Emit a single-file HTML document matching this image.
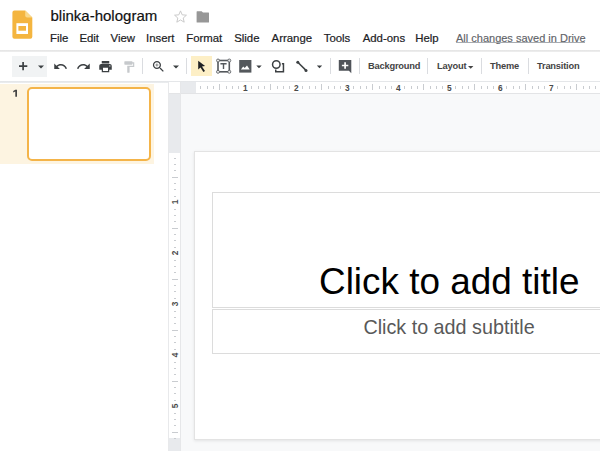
<!DOCTYPE html>
<html><head><meta charset="utf-8">
<style>
*{margin:0;padding:0;box-sizing:border-box}
html,body{width:600px;height:451px;overflow:hidden;background:#fff;font-family:"Liberation Sans",sans-serif;position:relative}
.a{position:absolute}
.t{position:absolute;white-space:nowrap;line-height:1}
.menu{font-size:11.4px;color:#202124;top:32.8px;-webkit-text-stroke:0.2px #202124}
.sep{position:absolute;width:1px;background:#dadce0;top:58px;height:16px}
.btxt{position:absolute;font-size:9.3px;color:#444;top:62.4px;line-height:1;white-space:nowrap;font-weight:bold;letter-spacing:-0.2px}
svg{position:absolute;display:block}
</style></head><body>

<!-- header -->
<svg class="a" style="left:12px;top:10px" width="21" height="29" viewBox="0 0 21 29"><path d="M2.4 0.4H13.2L20.3 7.6V26.7a2 2 0 0 1-2 2H2.4a2 2 0 0 1-2-2V2.4a2 2 0 0 1 2-2z" fill="#f4b53f"/><path d="M13.2 0.4L20.3 7.6H15.2a2 2 0 0 1-2-2z" fill="#f9d98c"/><rect x="4.4" y="13.2" width="11.6" height="10.8" fill="#fff"/><rect x="6.4" y="16" width="7.6" height="4.7" fill="#f4b53f"/></svg>
<div class="t" style="left:50.5px;top:8.3px;font-size:15px;color:#111;-webkit-text-stroke:0.2px #111">blinka-hologram</div>
<!-- star -->
<svg style="left:173px;top:9px" width="15" height="15" viewBox="0 0 24 24"><path d="M12 3l2.7 6.3 6.8.6-5.2 4.5 1.6 6.7L12 17.5l-5.9 3.6 1.6-6.7-5.2-4.5 6.8-.6z" fill="none" stroke="#c6c6c6" stroke-width="1.5" stroke-linejoin="round"/></svg>
<!-- folder -->
<svg style="left:196px;top:11px" width="14" height="12" viewBox="0 0 14 12"><path d="M1.1 0.2H5.6L7 1.6H12.5a0.5 0.5 0 0 1 .5.5V11a0.5 0.5 0 0 1-.5.5H1.1a0.5 0.5 0 0 1-.5-.5V0.7a0.5 0.5 0 0 1 .5-.5z" fill="#979797"/></svg>

<div class="t menu" style="left:50px">File</div>
<div class="t menu" style="left:79.4px">Edit</div>
<div class="t menu" style="left:110.5px">View</div>
<div class="t menu" style="left:146px">Insert</div>
<div class="t menu" style="left:186.2px">Format</div>
<div class="t menu" style="left:234.2px">Slide</div>
<div class="t menu" style="left:271.6px">Arrange</div>
<div class="t menu" style="left:323.7px">Tools</div>
<div class="t menu" style="left:362.7px">Add-ons</div>
<div class="t menu" style="left:415.2px">Help</div>
<div class="t menu" style="left:456px;font-size:11px;color:#5f6368;-webkit-text-stroke:0.15px #5f6368">All changes saved in Drive</div><div class="a" style="left:456px;top:42px;width:129px;height:1px;background:#a7abb0"></div>

<div class="a" style="left:0;top:50px;width:600px;height:2px;background:linear-gradient(#e4e4e4,#efefef)"></div>

<!-- toolbar -->
<div class="a" style="left:191px;top:56px;width:21px;height:20px;background:#fdefc6"></div>
<div class="a" style="left:12px;top:56px;width:35px;height:21px;background:#f1f3f4"></div>
<svg style="left:0;top:51px" width="60" height="30" viewBox="0 51 60 30"><path d="M19 65.35h8.3v1.7H19zM22.25 62.1h1.7v8.2h-1.7z" fill="#3c4043"/><path d="M38 65.6h6l-3 3z" fill="#3c4043"/></svg>

<svg style="left:53px;top:59px" width="15" height="15" viewBox="0 0 24 24"><path d="M12.5 8c-2.65 0-5.05.99-6.9 2.6L2 7v9h9l-3.62-3.62c1.39-1.16 3.16-1.88 5.12-1.88 3.540 0 6.55 2.31 7.6 5.5l2.37-.78C21.08 11.03 17.15 8 12.5 8z" fill="#3c4043"/></svg>
<svg style="left:76px;top:59px" width="15" height="15" viewBox="0 0 24 24"><path d="M18.4 10.6C16.55 8.99 14.15 8 11.5 8c-4.65 0-8.58 3.03-9.96 7.22L3.9 16c1.05-3.19 4.05-5.5 7.6-5.5 1.95 0 3.73.72 5.12 1.88L13 16h9V7l-3.6 3.6z" fill="#3c4043"/></svg>
<svg style="left:98px;top:59px" width="15" height="15" viewBox="0 0 24 24"><path d="M19 8H5c-1.66 0-3 1.34-3 3v6h4v4h12v-4h4v-6c0-1.66-1.34-3-3-3zm-3 11H8v-5h8v5zm3-7c-.55 0-1-.45-1-1s.45-1 1-1 1 .45 1 1-.45 1-1 1zm-1-9H6v4h12V3z" fill="#3c4043"/></svg>
<svg style="left:121.5px;top:59.5px" width="14" height="14" viewBox="0 0 24 24"><path d="M18 4V3c0-.55-.45-1-1-1H5c-.55 0-1 .45-1 1v4c0 .55.45 1 1 1h12c.55 0 1-.45 1-1V6h1v4H9v11c0 .55.45 1 1 1h2c.55 0 1-.45 1-1v-9h8V4h-3z" fill="#c6c9cc"/></svg>
<div class="sep" style="left:142px"></div>
<svg style="left:151px;top:59px" width="15" height="15" viewBox="0 0 24 24"><path d="M15.5 14h-.79l-.28-.27C15.41 12.59 16 11.11 16 9.5 16 5.91 13.090 3 9.5 3S3 5.91 3 9.5 5.91 16 9.5 16c1.61 0 3.09-.59 4.23-1.57l.27.28v.79l5 4.99L20.49 19l-4.99-5zm-6 0C7.01 14 5 11.99 5 9.5S7.01 5 9.5 5 14 7.01 14 9.5 11.99 14 9.5 14zm2.5-4h-2v2H9v-2H7V9h2V7h1v2h2v1z" fill="#3c4043"/></svg>
<svg style="left:0;top:51px" width="600" height="30" viewBox="0 51 600 30"><path d="M173 65.5h6l-3 3z M256.3 65.5h5.4l-2.7 2.7z M316.8 65.6h5.4l-2.7 2.7z" fill="#3c4043"/><path d="M198.2 60.8L205.1 66.1L202 66.5L205 71L203.4 72L200.5 67.4L198.2 69.6Z" fill="#202124"/><rect x="218" y="60.5" width="11.3" height="11.3" fill="none" stroke="#54585c" stroke-width="1.6"/><circle cx="218" cy="60.5" r="1.5" fill="#e8e8e8" stroke="#54585c" stroke-width="0.8"/><circle cx="229.3" cy="60.5" r="1.5" fill="#e8e8e8" stroke="#54585c" stroke-width="0.8"/><circle cx="218" cy="71.8" r="1.5" fill="#e8e8e8" stroke="#54585c" stroke-width="0.8"/><circle cx="229.3" cy="71.8" r="1.5" fill="#e8e8e8" stroke="#54585c" stroke-width="0.8"/><path d="M220.4 63.1h6.2v1.5h-2.4v4.5h-1.4v-4.5h-2.4z" fill="#54585c"/><rect x="239.2" y="60" width="12.2" height="12.6" fill="#54585c"/><path d="M240.9 69.6l2.3-3 1.5 1.3 2.3-2.4 2.7 4.1z" fill="#fff"/><circle cx="276.3" cy="64.5" r="3.75" fill="none" stroke="#3c4043" stroke-width="1.5"/><path d="M281.9 63.75H283.45V71.65H275.75V69.6" fill="none" stroke="#3c4043" stroke-width="1.5"/><path d="M297.8 62.2L306 70.4" stroke="#3c4043" stroke-width="1.5"/><circle cx="297.8" cy="62.2" r="1.5" fill="#3c4043"/><circle cx="306" cy="70.4" r="1.5" fill="#3c4043"/><path d="M338.8 60h12.5V73.2l-2.4-2.4H338.8z" fill="#50545a"/><path d="M341.9 64.65h6.4v1.7h-6.4zM344.25 62.3h1.7v6.4h-1.7z" fill="#fff"/></svg>
<div class="sep" style="left:186px"></div>







<div class="sep" style="left:330px"></div>

<div class="sep" style="left:359px"></div>
<div class="btxt" style="left:368px">Background</div>
<div class="sep" style="left:427px"></div>
<div class="btxt" style="left:437px">Layout</div>
<svg style="left:467.5px;top:66px" width="6" height="4" viewBox="0 0 6 4"><path d="M0 0h5.4L2.7 2.7z" fill="#444"/></svg>
<div class="sep" style="left:481px"></div>
<div class="btxt" style="left:490px">Theme</div>
<div class="sep" style="left:528px"></div>
<div class="btxt" style="left:537px">Transition</div>

<div class="a" style="left:0;top:81px;width:600px;height:2px;background:linear-gradient(#e2e4e7,#eceef0)"></div>

<!-- left panel -->
<div class="a" style="left:0;top:84px;width:154px;height:80px;background:#fdf4e1"></div>
<svg style="left:12px;top:89px" width="6" height="9" viewBox="0 0 6 9"><path d="M3.3 0.7H5V7.7H3.3V2.6L1.2 3.4V1.9z" fill="#444"/></svg>
<div class="a" style="left:27px;top:87px;width:124px;height:74px;border:2px solid #f4b449;border-radius:5px;background:#fff"></div>
<div class="a" style="left:168px;top:82px;width:1px;height:369px;background:#e8e9eb"></div>

<!-- canvas -->
<div class="a" style="left:169px;top:82px;width:431px;height:369px;background:#f8f9fa"></div>
<!-- rulers -->
<div class="a" style="left:169px;top:82px;width:431px;height:11px;background:#fff"></div>
<div class="a" style="left:180px;top:82px;width:16px;height:11px;background:#e8eaed"></div>
<div class="a" style="left:169px;top:93px;width:431px;height:1px;background:#e3e4e6"></div>
<div class="a" style="left:169px;top:94px;width:11px;height:357px;background:#fff"></div>
<div class="a" style="left:169px;top:94px;width:11px;height:59px;background:#e8eaed"></div>
<div class="a" style="left:169px;top:438px;width:11px;height:13px;background:#e8eaed"></div>
<div class="a" style="left:180px;top:82px;width:1px;height:369px;background:#e6e7e9"></div>
<!--HR--><div class="a" style="left:200.18px;top:86.3px;width:1px;height:2.3px;background:#c9ccd0"></div><div class="a" style="left:206.55px;top:86.3px;width:1px;height:2.3px;background:#c9ccd0"></div><div class="a" style="left:212.93px;top:86.3px;width:1px;height:2.3px;background:#c9ccd0"></div><div class="a" style="left:219.30px;top:84.3px;width:1px;height:6px;background:#c9ccd0"></div><div class="a" style="left:225.68px;top:86.3px;width:1px;height:2.3px;background:#c9ccd0"></div><div class="a" style="left:232.05px;top:86.3px;width:1px;height:2.3px;background:#c9ccd0"></div><div class="a" style="left:238.43px;top:86.3px;width:1px;height:2.3px;background:#c9ccd0"></div><div class="t" style="left:241.30px;top:83.6px;width:8px;height:8px;line-height:8px;font-size:8.3px;font-weight:bold;color:#4a4a4a;text-align:center">1</div><div class="a" style="left:251.18px;top:86.3px;width:1px;height:2.3px;background:#c9ccd0"></div><div class="a" style="left:257.55px;top:86.3px;width:1px;height:2.3px;background:#c9ccd0"></div><div class="a" style="left:263.93px;top:86.3px;width:1px;height:2.3px;background:#c9ccd0"></div><div class="a" style="left:270.30px;top:84.3px;width:1px;height:6px;background:#c9ccd0"></div><div class="a" style="left:276.68px;top:86.3px;width:1px;height:2.3px;background:#c9ccd0"></div><div class="a" style="left:283.05px;top:86.3px;width:1px;height:2.3px;background:#c9ccd0"></div><div class="a" style="left:289.43px;top:86.3px;width:1px;height:2.3px;background:#c9ccd0"></div><div class="t" style="left:292.30px;top:83.6px;width:8px;height:8px;line-height:8px;font-size:8.3px;font-weight:bold;color:#4a4a4a;text-align:center">2</div><div class="a" style="left:302.18px;top:86.3px;width:1px;height:2.3px;background:#c9ccd0"></div><div class="a" style="left:308.55px;top:86.3px;width:1px;height:2.3px;background:#c9ccd0"></div><div class="a" style="left:314.93px;top:86.3px;width:1px;height:2.3px;background:#c9ccd0"></div><div class="a" style="left:321.30px;top:84.3px;width:1px;height:6px;background:#c9ccd0"></div><div class="a" style="left:327.68px;top:86.3px;width:1px;height:2.3px;background:#c9ccd0"></div><div class="a" style="left:334.05px;top:86.3px;width:1px;height:2.3px;background:#c9ccd0"></div><div class="a" style="left:340.43px;top:86.3px;width:1px;height:2.3px;background:#c9ccd0"></div><div class="t" style="left:343.30px;top:83.6px;width:8px;height:8px;line-height:8px;font-size:8.3px;font-weight:bold;color:#4a4a4a;text-align:center">3</div><div class="a" style="left:353.18px;top:86.3px;width:1px;height:2.3px;background:#c9ccd0"></div><div class="a" style="left:359.55px;top:86.3px;width:1px;height:2.3px;background:#c9ccd0"></div><div class="a" style="left:365.93px;top:86.3px;width:1px;height:2.3px;background:#c9ccd0"></div><div class="a" style="left:372.30px;top:84.3px;width:1px;height:6px;background:#c9ccd0"></div><div class="a" style="left:378.68px;top:86.3px;width:1px;height:2.3px;background:#c9ccd0"></div><div class="a" style="left:385.05px;top:86.3px;width:1px;height:2.3px;background:#c9ccd0"></div><div class="a" style="left:391.43px;top:86.3px;width:1px;height:2.3px;background:#c9ccd0"></div><div class="t" style="left:394.30px;top:83.6px;width:8px;height:8px;line-height:8px;font-size:8.3px;font-weight:bold;color:#4a4a4a;text-align:center">4</div><div class="a" style="left:404.18px;top:86.3px;width:1px;height:2.3px;background:#c9ccd0"></div><div class="a" style="left:410.55px;top:86.3px;width:1px;height:2.3px;background:#c9ccd0"></div><div class="a" style="left:416.93px;top:86.3px;width:1px;height:2.3px;background:#c9ccd0"></div><div class="a" style="left:423.30px;top:84.3px;width:1px;height:6px;background:#c9ccd0"></div><div class="a" style="left:429.68px;top:86.3px;width:1px;height:2.3px;background:#c9ccd0"></div><div class="a" style="left:436.05px;top:86.3px;width:1px;height:2.3px;background:#c9ccd0"></div><div class="a" style="left:442.43px;top:86.3px;width:1px;height:2.3px;background:#c9ccd0"></div><div class="t" style="left:445.30px;top:83.6px;width:8px;height:8px;line-height:8px;font-size:8.3px;font-weight:bold;color:#4a4a4a;text-align:center">5</div><div class="a" style="left:455.18px;top:86.3px;width:1px;height:2.3px;background:#c9ccd0"></div><div class="a" style="left:461.55px;top:86.3px;width:1px;height:2.3px;background:#c9ccd0"></div><div class="a" style="left:467.93px;top:86.3px;width:1px;height:2.3px;background:#c9ccd0"></div><div class="a" style="left:474.30px;top:84.3px;width:1px;height:6px;background:#c9ccd0"></div><div class="a" style="left:480.68px;top:86.3px;width:1px;height:2.3px;background:#c9ccd0"></div><div class="a" style="left:487.05px;top:86.3px;width:1px;height:2.3px;background:#c9ccd0"></div><div class="a" style="left:493.43px;top:86.3px;width:1px;height:2.3px;background:#c9ccd0"></div><div class="t" style="left:496.30px;top:83.6px;width:8px;height:8px;line-height:8px;font-size:8.3px;font-weight:bold;color:#4a4a4a;text-align:center">6</div><div class="a" style="left:506.18px;top:86.3px;width:1px;height:2.3px;background:#c9ccd0"></div><div class="a" style="left:512.55px;top:86.3px;width:1px;height:2.3px;background:#c9ccd0"></div><div class="a" style="left:518.92px;top:86.3px;width:1px;height:2.3px;background:#c9ccd0"></div><div class="a" style="left:525.30px;top:84.3px;width:1px;height:6px;background:#c9ccd0"></div><div class="a" style="left:531.67px;top:86.3px;width:1px;height:2.3px;background:#c9ccd0"></div><div class="a" style="left:538.05px;top:86.3px;width:1px;height:2.3px;background:#c9ccd0"></div><div class="a" style="left:544.42px;top:86.3px;width:1px;height:2.3px;background:#c9ccd0"></div><div class="t" style="left:547.30px;top:83.6px;width:8px;height:8px;line-height:8px;font-size:8.3px;font-weight:bold;color:#4a4a4a;text-align:center">7</div><div class="a" style="left:557.17px;top:86.3px;width:1px;height:2.3px;background:#c9ccd0"></div><div class="a" style="left:563.55px;top:86.3px;width:1px;height:2.3px;background:#c9ccd0"></div><div class="a" style="left:569.92px;top:86.3px;width:1px;height:2.3px;background:#c9ccd0"></div><div class="a" style="left:576.30px;top:84.3px;width:1px;height:6px;background:#c9ccd0"></div><div class="a" style="left:582.67px;top:86.3px;width:1px;height:2.3px;background:#c9ccd0"></div><div class="a" style="left:589.05px;top:86.3px;width:1px;height:2.3px;background:#c9ccd0"></div><div class="a" style="left:595.42px;top:86.3px;width:1px;height:2.3px;background:#c9ccd0"></div><!--/HR-->
<!--VR--><div class="a" style="left:173.5px;top:157.57px;width:2.3px;height:1px;background:#c9ccd0"></div><div class="a" style="left:173.5px;top:163.95px;width:2.3px;height:1px;background:#c9ccd0"></div><div class="a" style="left:173.5px;top:170.32px;width:2.3px;height:1px;background:#c9ccd0"></div><div class="a" style="left:171.5px;top:176.70px;width:6px;height:1px;background:#c9ccd0"></div><div class="a" style="left:173.5px;top:183.07px;width:2.3px;height:1px;background:#c9ccd0"></div><div class="a" style="left:173.5px;top:189.45px;width:2.3px;height:1px;background:#c9ccd0"></div><div class="a" style="left:173.5px;top:195.82px;width:2.3px;height:1px;background:#c9ccd0"></div><div class="t" style="left:171px;top:198.00px;width:8px;height:8px;line-height:8px;font-size:8.3px;font-weight:bold;color:#4a4a4a;text-align:center;transform:rotate(-90deg)">1</div><div class="a" style="left:173.5px;top:208.57px;width:2.3px;height:1px;background:#c9ccd0"></div><div class="a" style="left:173.5px;top:214.95px;width:2.3px;height:1px;background:#c9ccd0"></div><div class="a" style="left:173.5px;top:221.32px;width:2.3px;height:1px;background:#c9ccd0"></div><div class="a" style="left:171.5px;top:227.70px;width:6px;height:1px;background:#c9ccd0"></div><div class="a" style="left:173.5px;top:234.07px;width:2.3px;height:1px;background:#c9ccd0"></div><div class="a" style="left:173.5px;top:240.45px;width:2.3px;height:1px;background:#c9ccd0"></div><div class="a" style="left:173.5px;top:246.82px;width:2.3px;height:1px;background:#c9ccd0"></div><div class="t" style="left:171px;top:249.00px;width:8px;height:8px;line-height:8px;font-size:8.3px;font-weight:bold;color:#4a4a4a;text-align:center;transform:rotate(-90deg)">2</div><div class="a" style="left:173.5px;top:259.57px;width:2.3px;height:1px;background:#c9ccd0"></div><div class="a" style="left:173.5px;top:265.95px;width:2.3px;height:1px;background:#c9ccd0"></div><div class="a" style="left:173.5px;top:272.32px;width:2.3px;height:1px;background:#c9ccd0"></div><div class="a" style="left:171.5px;top:278.70px;width:6px;height:1px;background:#c9ccd0"></div><div class="a" style="left:173.5px;top:285.07px;width:2.3px;height:1px;background:#c9ccd0"></div><div class="a" style="left:173.5px;top:291.45px;width:2.3px;height:1px;background:#c9ccd0"></div><div class="a" style="left:173.5px;top:297.82px;width:2.3px;height:1px;background:#c9ccd0"></div><div class="t" style="left:171px;top:300.00px;width:8px;height:8px;line-height:8px;font-size:8.3px;font-weight:bold;color:#4a4a4a;text-align:center;transform:rotate(-90deg)">3</div><div class="a" style="left:173.5px;top:310.57px;width:2.3px;height:1px;background:#c9ccd0"></div><div class="a" style="left:173.5px;top:316.95px;width:2.3px;height:1px;background:#c9ccd0"></div><div class="a" style="left:173.5px;top:323.32px;width:2.3px;height:1px;background:#c9ccd0"></div><div class="a" style="left:171.5px;top:329.70px;width:6px;height:1px;background:#c9ccd0"></div><div class="a" style="left:173.5px;top:336.07px;width:2.3px;height:1px;background:#c9ccd0"></div><div class="a" style="left:173.5px;top:342.45px;width:2.3px;height:1px;background:#c9ccd0"></div><div class="a" style="left:173.5px;top:348.82px;width:2.3px;height:1px;background:#c9ccd0"></div><div class="t" style="left:171px;top:351.00px;width:8px;height:8px;line-height:8px;font-size:8.3px;font-weight:bold;color:#4a4a4a;text-align:center;transform:rotate(-90deg)">4</div><div class="a" style="left:173.5px;top:361.57px;width:2.3px;height:1px;background:#c9ccd0"></div><div class="a" style="left:173.5px;top:367.95px;width:2.3px;height:1px;background:#c9ccd0"></div><div class="a" style="left:173.5px;top:374.32px;width:2.3px;height:1px;background:#c9ccd0"></div><div class="a" style="left:171.5px;top:380.70px;width:6px;height:1px;background:#c9ccd0"></div><div class="a" style="left:173.5px;top:387.07px;width:2.3px;height:1px;background:#c9ccd0"></div><div class="a" style="left:173.5px;top:393.45px;width:2.3px;height:1px;background:#c9ccd0"></div><div class="a" style="left:173.5px;top:399.82px;width:2.3px;height:1px;background:#c9ccd0"></div><div class="t" style="left:171px;top:402.00px;width:8px;height:8px;line-height:8px;font-size:8.3px;font-weight:bold;color:#4a4a4a;text-align:center;transform:rotate(-90deg)">5</div><div class="a" style="left:173.5px;top:412.57px;width:2.3px;height:1px;background:#c9ccd0"></div><div class="a" style="left:173.5px;top:418.95px;width:2.3px;height:1px;background:#c9ccd0"></div><div class="a" style="left:173.5px;top:425.32px;width:2.3px;height:1px;background:#c9ccd0"></div><div class="a" style="left:171.5px;top:431.70px;width:6px;height:1px;background:#c9ccd0"></div><div class="a" style="left:173.5px;top:438.07px;width:2.3px;height:1px;background:#c9ccd0"></div><!--/VR-->

<!-- slide -->
<div class="a" style="left:195px;top:152px;width:510px;height:287px;background:#fff;box-shadow:0 0 0 1px #e3e3e3,0 1px 3px 1px rgba(0,0,0,.09)"></div>
<div class="a" style="left:212px;top:192px;width:474px;height:116px;border:1px solid #dcdcdc"></div>
<div class="a" style="left:212px;top:309px;width:474px;height:45px;border:1px solid #dcdcdc"></div>
<div class="t" style="left:319px;top:264px;font-size:36.9px;color:#000">Click to add title</div>
<div class="t" style="left:363.4px;top:318.4px;font-size:19.75px;color:#595959">Click to add subtitle</div>

</body></html>
